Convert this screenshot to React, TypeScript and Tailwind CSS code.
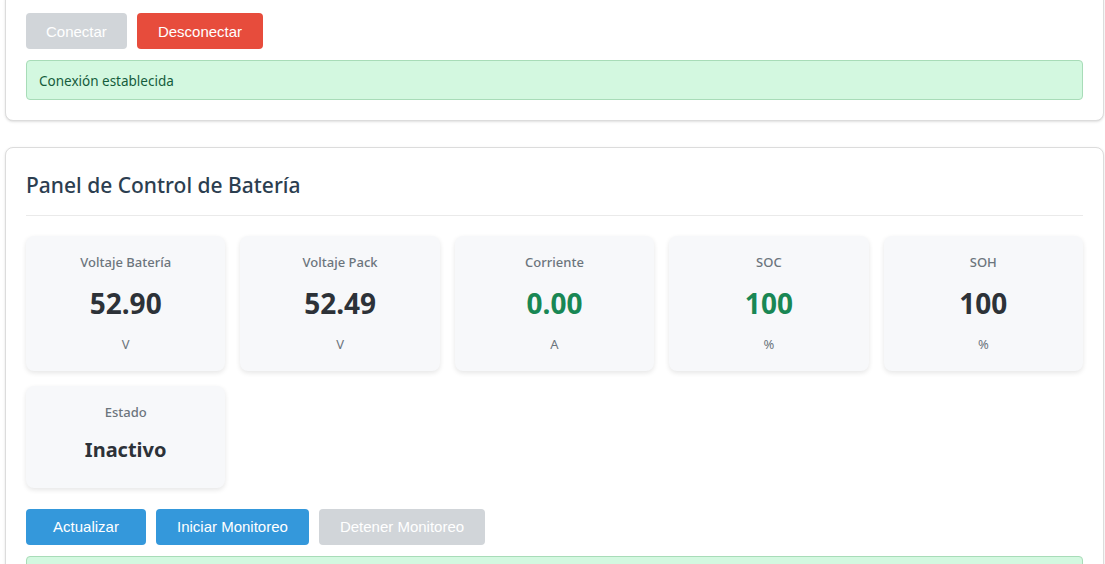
import type { ReactNode } from "react";

const font = { fontFamily: "'Noto Sans', 'Open Sans', sans-serif" };

const metrics = [
  { label: "Voltaje Batería", value: "52.90", unit: "V", green: false },
  { label: "Voltaje Pack", value: "52.49", unit: "V", green: false },
  { label: "Corriente", value: "0.00", unit: "A", green: true },
  { label: "SOC", value: "100", unit: "%", green: true },
  { label: "SOH", value: "100", unit: "%", green: false },
];

function Button({
  children,
  tone,
  className = "min-w-[120px] px-[21px]",
}: {
  children: ReactNode;
  tone: "gray" | "red" | "blue";
  className?: string;
}) {
  const colors = {
    gray: "bg-[#d1d5d9]",
    red: "bg-[#e74c3c]",
    blue: "bg-[#3498db]",
  }[tone];
  return (
    <button
      type="button"
      className={`h-9 rounded pt-[2px] text-[15px] text-white ${colors} ${className}`}
      style={{ fontFamily: "'Liberation Sans', Arial, sans-serif" }}
    >
      {children}
    </button>
  );
}

function Status({ children }: { children?: ReactNode }) {
  return (
    <div className="flex h-10 items-center rounded border border-[#a8dcb8] bg-[#d3f8e0] px-3 pt-[2px] text-[13.5px] text-[#155c3c]">
      {children}
    </div>
  );
}

export default function App() {
  return (
    <main
      className="h-screen overflow-hidden bg-white pl-[5px] pr-px text-[#333]"
      style={font}
    >
      {/* CONNECTION */}
      <section className="-mt-[8px] rounded-lg border border-[#dcdcdc] bg-white px-5 pb-5 pt-5 shadow-sm">
        <div className="flex gap-[10px]">
          <Button tone="gray" className="px-5">
            Conectar
          </Button>
          <Button tone="red" className="px-[21px]">
            Desconectar
          </Button>
        </div>
        <div className="mt-[11px]">
          <Status>Conexión establecida</Status>
        </div>
      </section>

      {/* BATTERY PANEL */}
      <section className="mt-[26px] rounded-lg border border-[#dcdcdc] bg-white px-5 pt-[22px] pb-5 shadow-sm">
        <h2 className="border-b border-[#eaeaea] pb-[13px] text-[21px] font-medium text-[#2c3e50]">
          Panel de Control de Batería
        </h2>

        <div className="mt-5 grid grid-cols-5 gap-[15px]">
          {metrics.map((m) => (
            <div
              key={m.label}
              className="flex h-[135px] flex-col items-center rounded-lg bg-[#f7f8fa] pt-[17px] shadow-[0_2px_5px_rgba(0,0,0,0.1)]"
            >
              <p className="text-[13px] font-medium text-[#6c757d]">{m.label}</p>
              <p
                className={`mt-[11px] text-[28px] font-bold leading-[40px] ${
                  m.green ? "text-[#198754]" : "text-[#2d3238]"
                }`}
              >
                {m.value}
              </p>
              <p className="mt-[12px] text-[13px] text-[#6c757d]">{m.unit}</p>
            </div>
          ))}
          <div className="flex h-[102px] flex-col items-center rounded-lg bg-[#f7f8fa] pt-[17px] shadow-[0_2px_5px_rgba(0,0,0,0.1)]">
            <p className="text-[13px] font-medium text-[#6c757d]">Estado</p>
            <p className="mt-[13px] text-[20px] font-bold text-[#2d3238]">Inactivo</p>
          </div>
        </div>

        <div className="mt-[21px] flex gap-[10px]">
          <Button tone="blue">Actualizar</Button>
          <Button tone="blue">Iniciar Monitoreo</Button>
          <Button tone="gray">Detener Monitoreo</Button>
        </div>
        <div className="mt-[11px]">
          <Status />
        </div>
      </section>
    </main>
  );
}
